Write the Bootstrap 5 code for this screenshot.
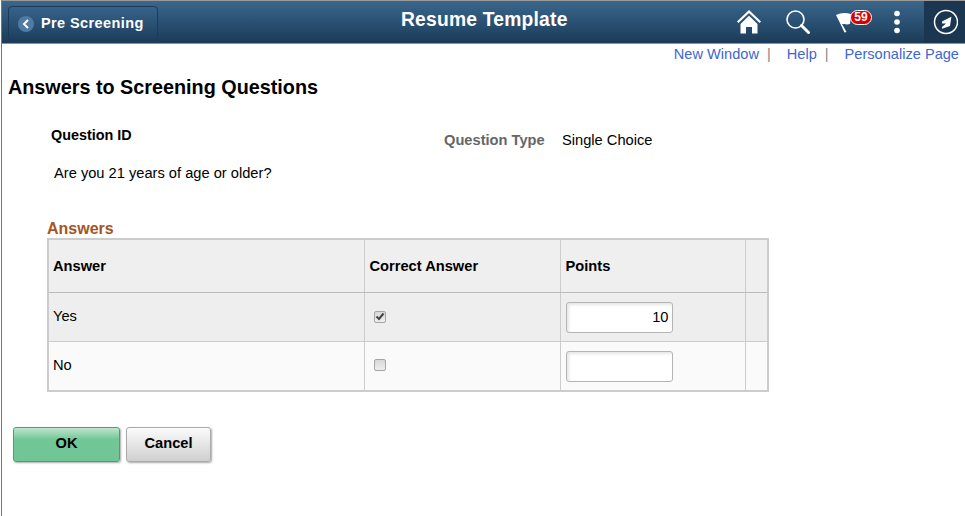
<!DOCTYPE html>
<html lang="en">
<head>
<meta charset="utf-8">
<title>Resume Template</title>
<link href="https://cdn.jsdelivr.net/npm/bootstrap@5.3.0/dist/css/bootstrap.min.css" rel="stylesheet">
<style>
html,body{height:100%;}
body{font-family:"Liberation Sans",Arial,sans-serif;font-size:14.67px;color:#000;background:#fff;overflow:hidden;}
.page-shell{width:964px;height:516px;border-left:1px solid #777;margin-left:1px;overflow:hidden;}
.top-bar{height:44px;border-top:1px solid #999;border-bottom:1px solid #6f9ac4;background:linear-gradient(#3a678c,#1b3b58);}
.back-btn{width:150px;height:35px;margin:5px 0 0 6px;border:1px solid #1d3b57;border-radius:4px;background:linear-gradient(#37638a,#1d3f5e);color:#fff;font-weight:700;font-size:14.5px;letter-spacing:.4px;padding:0 0 0 9px;gap:7px;}
.back-dot{width:16px;height:16px;border-radius:50%;background:#4e7ba1;}
.bar-title{color:#fff;font-size:19.3px;font-weight:700;margin-left:243px;letter-spacing:.2px;padding-bottom:4px;}
.tool-wrap{margin-left:auto;}
.gap-search{margin-left:25px;}
.gap-flag{margin-left:26px;}
.gap-dots{margin-left:21px;}
.gap-compass{margin-left:23px;}
.flag-wrap{width:36px;height:34px;}
.flag-shape{position:absolute;left:0;top:3px;}
.flag-count{position:absolute;left:14px;top:5px;height:15px;width:22px;border-radius:8px;background:#d80000;border:1.5px solid #fff;color:#fff;font-size:12px;font-weight:700;line-height:12px;text-align:center;}
.compass-box{width:41px;height:42px;background:#1a3650;}
.util-links{height:21px;font-size:14.6px;padding-right:6px;}
.util-links a{color:#3e66d0;text-decoration:none;}
.util-links .sepr{color:#888;margin:0 16px 0 8px;}
.page-head{font-size:19.8px;font-weight:700;margin:10px 0 0 6px;line-height:24px;}
.q-top{margin:28px 0 0 49px;height:37px;}
.q-id{font-weight:700;width:393px;line-height:16px;font-size:14.4px;}
.q-type-label{font-weight:700;color:#666;width:118px;padding-top:5px;line-height:16px;}
.q-type-val{padding-top:5px;line-height:16px;}
.q-text{margin:0 0 0 52px;padding-top:1px;line-height:16px;}
.ans-head{color:#a5551d;font-weight:700;font-size:16px;line-height:18px;margin:39px 0 0 45px;}
.ans-table{width:722px;margin:0 0 0 45px;border:2px solid #ccc;table-layout:fixed;border-collapse:collapse;}
.ans-table th,.ans-table td{border:1px solid #ccc;padding:0 5px;vertical-align:middle;background:transparent;}
.ans-table th:first-child,.ans-table td:first-child{padding-left:4px;}
.ans-table td:first-child{padding-bottom:2px;}
.ans-table td.cell-input{padding-top:1px;}
.ans-table td.cell-chk-b{padding-bottom:1px;}
.ans-table th{height:53px;font-weight:700;background:#efefef;border-bottom-color:#bbb;}
.row-a td{height:49px;background:#eee;}
.row-b td{height:50px;background:#fafafa;}
.chk{width:12px;height:12px;border:1px solid #a5a5a5;border-radius:2px;background:linear-gradient(#d8d8d8,#eee);margin-left:4px;display:flex;align-items:center;justify-content:center;}
.pts-input{width:107px;height:31px;border:1px solid #b4b4b4;border-radius:3px;background:#fff;box-shadow:inset 2px 2px 3px #e6e6e6;text-align:right;padding:0 3px;font-size:14.67px;display:block;}
.btn-row{margin:35px 0 0 11px;gap:6px;}
.act-btn{height:35px;border-radius:3px;font-weight:700;font-size:14.67px;color:#000;padding:0 0 3px;box-shadow:1px 1px 2px #aaa;}
.act-ok{width:107px;background:linear-gradient(#bfe5cd,#72c796 35%,#6fc593);border:1px solid #3da86c;}
.act-cancel{width:85px;background:linear-gradient(#fbfbfb,#cfcfcf);border:1px solid #aaa;}
</style>
</head>
<body>
<div class="page-shell">
  <header class="top-bar d-flex align-items-start">
    <button class="back-btn d-flex align-items-center" type="button">
      <span class="back-dot d-flex align-items-center justify-content-center">
        <svg width="8" height="10" viewBox="0 0 8 10"><path d="M6 1 2 5l4 4" fill="none" stroke="#fff" stroke-width="2"/></svg>
      </span>
      Pre Screening
    </button>
    <div class="bar-title align-self-center">Resume Template</div>
    <div class="tool-wrap d-flex align-items-center">
      <svg width="24" height="24" viewBox="0 0 24 24"><path d="M12 0 0 11.500l1.400 1.500L12 2.900 22.600 13 24 11.500zM3.500 14 12 5.700l8.500 8.300v9.500H15V17H9v6.500H3.500z" fill="#fff"/></svg>
      <svg class="gap-search" width="24" height="24" viewBox="0 0 24 24"><circle cx="9.500" cy="9.500" r="8.500" fill="none" stroke="#fff" stroke-width="1.600"/><path d="m15.500 15.500 7 7" stroke="#fff" stroke-width="3" stroke-linecap="round"/></svg>
      <div class="flag-wrap gap-flag position-relative">
        <svg class="flag-shape" width="24" height="30" viewBox="0 0 24 30"><path d="M0 7C4 5 9 4 15 6l-1 10c-3 1-6 0-8 0l4.500 8-2 .5L3 13z" fill="#fff"/></svg>
        <span class="flag-count">59</span>
      </div>
      <svg class="gap-dots" width="8" height="24" viewBox="0 0 8 24"><circle cx="4" cy="3.500" r="2.800" fill="#fff"/><circle cx="4" cy="12" r="2.800" fill="#fff"/><circle cx="4" cy="20.500" r="2.800" fill="#fff"/></svg>
      <div class="compass-box gap-compass d-flex align-items-center justify-content-center">
        <svg width="26" height="26" viewBox="-1 0 26 26"><circle cx="13" cy="13" r="11.500" fill="none" stroke="#fff" stroke-width="1.500"/><path d="M9 12.400l9.400-4.700L17 17l-8 2.700z" fill="#fff"/><path d="M9 14.500h4L9 18z" fill="#1a3650"/></svg>
      </div>
    </div>
  </header>

  <nav class="util-links d-flex justify-content-end">
    <a href="#">New Window</a><span class="sepr">|</span><a href="#">Help</a><span class="sepr">|</span><a href="#">Personalize Page</a>
  </nav>

  <h1 class="page-head">Answers to Screening Questions</h1>

  <div class="q-top d-flex">
    <div class="q-id">Question ID</div>
    <div class="q-type-label">Question Type</div>
    <div class="q-type-val">Single Choice</div>
  </div>
  <div class="q-text">Are you 21 years of age or older?</div>

  <div class="ans-head">Answers</div>
  <table class="ans-table">
    <colgroup><col style="width:316px"><col style="width:196px"><col style="width:185px"><col></colgroup>
    <thead>
      <tr><th>Answer</th><th>Correct Answer</th><th>Points</th><th></th></tr>
    </thead>
    <tbody>
      <tr class="row-a">
        <td>Yes</td>
        <td><span class="chk"><svg width="10" height="9" viewBox="0 0 10 9"><path d="M1.500 4.500 4 7l4.500-5.500" fill="none" stroke="#444" stroke-width="2"/></svg></span></td>
        <td class="cell-input"><input class="pts-input" type="text" value="10" aria-label="Points for Yes"></td>
        <td></td>
      </tr>
      <tr class="row-b">
        <td>No</td>
        <td class="cell-chk-b"><span class="chk"></span></td>
        <td class="cell-input"><input class="pts-input" type="text" aria-label="Points for No"></td>
        <td></td>
      </tr>
    </tbody>
  </table>

  <div class="btn-row d-flex">
    <button class="act-btn act-ok" type="button">OK</button>
    <button class="act-btn act-cancel" type="button">Cancel</button>
  </div>
</div>
<script src="https://cdn.jsdelivr.net/npm/bootstrap@5.3.0/dist/js/bootstrap.bundle.min.js"></script>
</body>
</html>
